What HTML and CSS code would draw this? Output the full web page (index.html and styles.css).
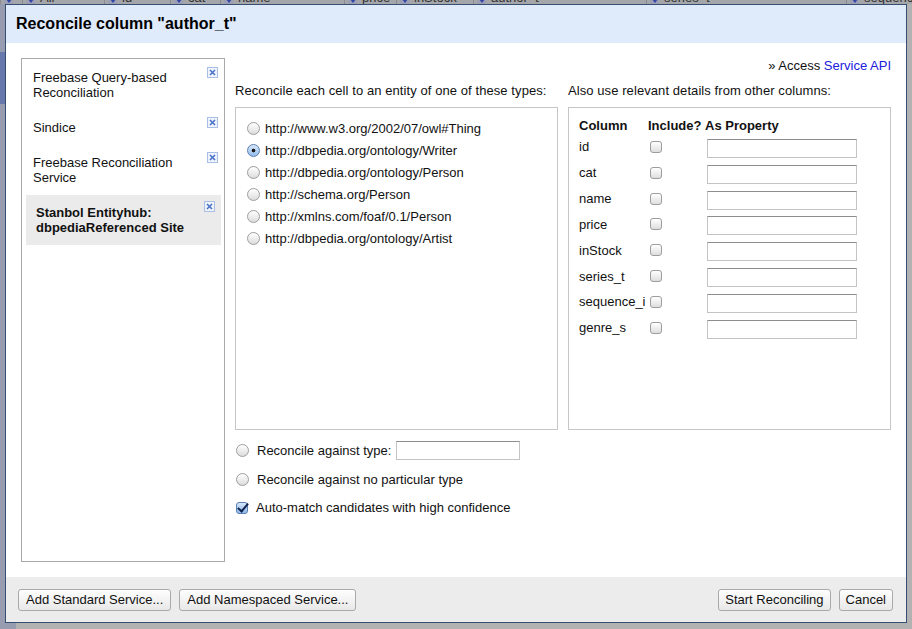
FILE: index.html
```html
<!DOCTYPE html>
<html>
<head>
<meta charset="utf-8">
<title>Reconcile column</title>
<link rel="stylesheet" href="styles.css">
</head>
<body>
<div class="page">
  <div class="grid-head">
    <div class="gh-row">
      <div class="gh-cell"><span class="gh-arrow"></span>&nbsp;</div>
      <div class="gh-cell"><span class="gh-arrow"></span>All</div>
      <div class="gh-cell"><span class="gh-arrow"></span>id</div>
      <div class="gh-cell"><span class="gh-arrow"></span>cat</div>
      <div class="gh-cell"><span class="gh-arrow"></span>name</div>
      <div class="gh-cell"><span class="gh-arrow"></span>price</div>
      <div class="gh-cell"><span class="gh-arrow"></span>inStock</div>
      <div class="gh-cell"><span class="gh-arrow"></span>author_t</div>
      <div class="gh-cell"><span class="gh-arrow"></span>series_t</div>
      <div class="gh-cell"><span class="gh-arrow"></span>sequence_i</div>
    </div>
  </div>
  <div class="page-body">
    <div class="side-strip"><div class="side-mark"></div></div>
    <div class="page-rest"></div>
  </div>
</div>

<div class="dialog">
  <div class="dlg-head"><h1 class="dlg-title">Reconcile column "author_t"</h1></div>
  <div class="dlg-body">
    <div class="services">
      <div class="service">
        <span class="service-name">Freebase Query-based Reconciliation</span>
        <span class="close"><svg width="11" height="11" viewBox="0 0 11 11"><rect x="0.5" y="0.5" width="10" height="10" fill="#eef3fc" stroke="#a9bfe6"/><path d="M3 3 L8 8 M8 3 L3 8" stroke="#4a72c8" stroke-width="1.6"/></svg></span>
      </div>
      <div class="service">
        <span class="service-name">Sindice</span>
        <span class="close"><svg width="11" height="11" viewBox="0 0 11 11"><rect x="0.5" y="0.5" width="10" height="10" fill="#eef3fc" stroke="#a9bfe6"/><path d="M3 3 L8 8 M8 3 L3 8" stroke="#4a72c8" stroke-width="1.6"/></svg></span>
      </div>
      <div class="service">
        <span class="service-name">Freebase Reconciliation Service</span>
        <span class="close"><svg width="11" height="11" viewBox="0 0 11 11"><rect x="0.5" y="0.5" width="10" height="10" fill="#eef3fc" stroke="#a9bfe6"/><path d="M3 3 L8 8 M8 3 L3 8" stroke="#4a72c8" stroke-width="1.6"/></svg></span>
      </div>
      <div class="service selected">
        <span class="service-name">Stanbol Entityhub: dbpediaReferenced Site</span>
        <span class="close"><svg width="11" height="11" viewBox="0 0 11 11"><rect x="0.5" y="0.5" width="10" height="10" fill="#eef3fc" stroke="#a9bfe6"/><path d="M3 3 L8 8 M8 3 L3 8" stroke="#4a72c8" stroke-width="1.6"/></svg></span>
      </div>
    </div>

    <div class="main">
      <div class="access">» Access <a class="api-link">Service API</a></div>
      <div class="cols">
        <div class="col">
          <div class="label">Reconcile each cell to an entity of one of these types:</div>
          <div class="box types">
            <label class="type-row"><input type="radio" name="t" class="radio"><span>http://www.w3.org/2002/07/owl#Thing</span></label>
            <label class="type-row"><input type="radio" name="t" class="radio" checked><span>http://dbpedia.org/ontology/Writer</span></label>
            <label class="type-row"><input type="radio" name="t" class="radio"><span>http://dbpedia.org/ontology/Person</span></label>
            <label class="type-row"><input type="radio" name="t" class="radio"><span>http://schema.org/Person</span></label>
            <label class="type-row"><input type="radio" name="t" class="radio"><span>http://xmlns.com/foaf/0.1/Person</span></label>
            <label class="type-row"><input type="radio" name="t" class="radio"><span>http://dbpedia.org/ontology/Artist</span></label>
          </div>
          <div class="opt-row first">
            <input type="radio" name="t" class="radio opt-radio"><span>Reconcile against type:</span><input type="text" class="type-input">
          </div>
          <div class="opt-row">
            <input type="radio" name="t" class="radio opt-radio"><span>Reconcile against no particular type</span>
          </div>
          <div class="opt-row">
            <input type="checkbox" class="check opt-radio" checked><span>Auto-match candidates with high confidence</span>
          </div>
        </div>
        <div class="col">
          <div class="label">Also use relevant details from other columns:</div>
          <div class="box props">
            <div class="props-grid">
              <div class="ph">Column</div><div class="ph">Include?</div><div class="ph">As Property</div>
              <div class="pc">id</div><div class="pc"><input type="checkbox" class="check"></div><div class="pc"><input type="text" class="prop-input"></div>
              <div class="pc">cat</div><div class="pc"><input type="checkbox" class="check"></div><div class="pc"><input type="text" class="prop-input"></div>
              <div class="pc">name</div><div class="pc"><input type="checkbox" class="check"></div><div class="pc"><input type="text" class="prop-input"></div>
              <div class="pc">price</div><div class="pc"><input type="checkbox" class="check"></div><div class="pc"><input type="text" class="prop-input"></div>
              <div class="pc">inStock</div><div class="pc"><input type="checkbox" class="check"></div><div class="pc"><input type="text" class="prop-input"></div>
              <div class="pc">series_t</div><div class="pc"><input type="checkbox" class="check"></div><div class="pc"><input type="text" class="prop-input"></div>
              <div class="pc">sequence_i</div><div class="pc"><input type="checkbox" class="check"></div><div class="pc"><input type="text" class="prop-input"></div>
              <div class="pc">genre_s</div><div class="pc"><input type="checkbox" class="check"></div><div class="pc"><input type="text" class="prop-input"></div>
            </div>
          </div>
        </div>
      </div>
    </div>
  </div>
  <div class="dlg-foot">
    <div class="btn-group">
      <button class="btn">Add Standard Service...</button>
      <button class="btn">Add Namespaced Service...</button>
    </div>
    <div class="btn-group">
      <button class="btn btn-compact">Start Reconciling</button>
      <button class="btn btn-compact">Cancel</button>
    </div>
  </div>
</div>
</body>
</html>
```

FILE: styles.css
```css
* { box-sizing: border-box; }

html, body {
  margin: 0;
  padding: 0;
  width: 912px;
  height: 629px;
  overflow: hidden;
}

body {
  background: #b1b1b3;
  font-family: "Liberation Sans", Arial, sans-serif;
  font-size: 13px;
  color: #111;
  position: relative;
}

/* background page (under overlay) */
.page {
  height: 629px;
  display: flex;
  flex-direction: column;
}

.grid-head {
  height: 4px;
  overflow: hidden;
  background: #a5a6aa;
}

.gh-row {
  display: grid;
  grid-template-columns: 22px 82px 66px 50px 124px 52px 77px 173px 200px 1fr;
  margin-top: -9px;
  height: 14px;
  line-height: 14px;
  font-size: 13px;
  color: #333;
}

.gh-cell {
  border-left: 1px solid #8a8b90;
  padding-left: 3px;
  white-space: nowrap;
  overflow: hidden;
  display: flex;
  align-items: center;
  gap: 5px;
}

.gh-arrow {
  width: 9px;
  height: 14px;
  background: #9c9fb4;
  position: relative;
  flex: none;
}

.gh-arrow::after {
  content: "";
  position: absolute;
  left: 2px;
  bottom: 2px;
  border-left: 3px solid transparent;
  border-right: 3px solid transparent;
  border-top: 4px solid #3346a8;
}

.page-body {
  flex: 1;
  display: flex;
}

.side-strip {
  width: 16px;
  background: #979cb0;
  padding-top: 48px;
}

.side-mark {
  height: 52px;
  background: #6779ac;
}

.page-rest { flex: 1; background: #b2b2b3; }

/* dialog */
.dialog {
  position: absolute;
  left: 5px;
  top: 4px;
  width: 902px;
  height: 619px;
  border: 1px solid #364e72;
  background: #fff;
  display: flex;
  flex-direction: column;
}

.dlg-head {
  height: 38px;
  background: #dfeafb;
  display: flex;
  align-items: center;
  padding-left: 10px;
  flex: none;
}

.dlg-title {
  margin: 0;
  font-size: 16px;
  font-weight: bold;
  color: #000;
  line-height: 20px;
}

.dlg-body {
  height: 534px;
  flex: none;
  padding: 15px;
  display: grid;
  grid-template-columns: 204px 1fr;
  column-gap: 10px;
}

/* services list */
.services {
  border: 1px solid #a9a9a9;
  padding: 1px 3px 1px 4px;
  display: flex;
  flex-direction: column;
}

.service {
  position: relative;
  padding: 10px 22px 10px 7px;
  line-height: 15px;
}

.service.selected {
  background: #ebebeb;
  font-weight: bold;
  padding-left: 10px;
}

.close {
  position: absolute;
  top: 7px;
  right: 3px;
  width: 11px;
  height: 11px;
  display: block;
}

.close svg { display: block; }

.service.selected .close { top: 6px; right: 6px; }

/* main area */
.main {
  display: flex;
  flex-direction: column;
}

.access {
  text-align: right;
  line-height: 15px;
  height: 15px;
}

.api-link { color: #2020dc; }

.cols {
  margin-top: 10px;
  display: grid;
  grid-template-columns: 323px 323px;
  column-gap: 10px;
}

.col {
  display: flex;
  flex-direction: column;
}

.label {
  line-height: 15px;
  margin-bottom: 9px;
  white-space: nowrap;
  letter-spacing: 0.08px;
}

.box {
  height: 323px;
  border: 1px solid #c6c6c6;
}

.types {
  padding: 9px 10px 9px 11px;
}

.type-row {
  height: 22px;
  display: flex;
  align-items: center;
  gap: 5px;
}

/* custom radios / checkboxes */
.radio {
  -webkit-appearance: none;
  appearance: none;
  margin: 0;
  width: 13px;
  height: 13px;
  border-radius: 50%;
  border: 1px solid #9d9d9d;
  background: linear-gradient(#ffffff, #dcdcdc);
  flex: none;
  position: relative;
}

.radio:checked {
  border-color: #5c7fb2;
  background: radial-gradient(circle, #1b1b1b 0 1.6px, transparent 2.2px), linear-gradient(#d8e8fb, #91bcec);
}

.check {
  -webkit-appearance: none;
  appearance: none;
  margin: 0;
  width: 12px;
  height: 12px;
  border-radius: 3px;
  border: 1px solid #9d9d9d;
  background: linear-gradient(#ffffff, #dedede);
  flex: none;
  position: relative;
}

.check:checked {
  border-color: #5d80b4;
  background: linear-gradient(#d6e7fb, #8fb9ea);
}

.check:checked::after {
  content: "";
  position: absolute;
  left: 3px;
  top: -2px;
  width: 4px;
  height: 9px;
  border-right: 2px solid #10244e;
  border-bottom: 2px solid #10244e;
  transform: rotate(40deg);
}

.opt-row {
  display: flex;
  align-items: center;
  height: 15px;
  margin-top: 13px;
  line-height: 15px;
}

.opt-row.first {
  height: 19px;
  margin-top: 11px;
  margin-bottom: -1px;
}

.opt-radio {
  margin-left: 1px;
  margin-right: 8px;
}

.type-input {
  margin-left: 5px;
  width: 124px;
  height: 19px;
  border: 1px solid #c4c4c4;
  border-top-color: #8e8e8e;
  padding: 0 3px;
  font: inherit;
}

/* properties table */
.props {
  padding: 10px;
}

.props-grid {
  display: grid;
  grid-template-columns: 69px 57px 1fr;
  grid-template-rows: 16px repeat(8, 25.85px);
}

.ph {
  font-weight: bold;
  line-height: 16px;
  white-space: nowrap;
}

.pc {
  display: flex;
  align-items: center;
  white-space: nowrap;
}

.pc .check { margin-left: 2px; }

.prop-input {
  margin-left: 2px;
  margin-top: 3px;
  width: 150px;
  height: 19px;
  border: 1px solid #c4c4c4;
  border-top-color: #8e8e8e;
  padding: 0 3px;
  font: inherit;
}

/* footer */
.dlg-foot {
  flex: 1;
  background: #ececec;
  padding: 12px 13px 0 12px;
  display: flex;
  justify-content: space-between;
  align-items: flex-start;
}

.btn-group {
  display: flex;
  gap: 8px;
}

.btn {
  font-family: "Liberation Sans", Arial, sans-serif;
  font-size: 13px;
  color: #111;
  height: 22px;
  padding: 0 7px;
  border: 1px solid #a9a9a9;
  border-radius: 3px;
  background: linear-gradient(#fefefe, #e8e8e8);
  line-height: 20px;
}

.btn-compact {
  padding: 0 6px;
}
```
